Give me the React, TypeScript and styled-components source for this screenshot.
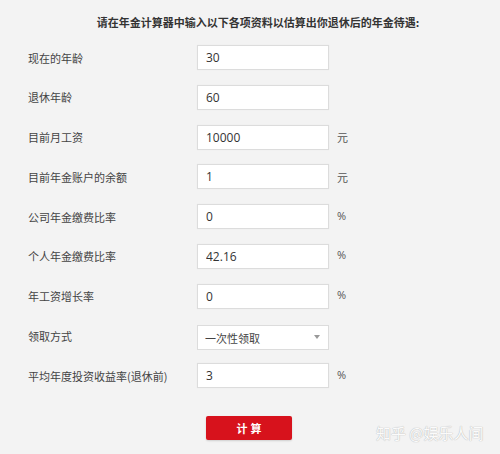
import React from "react";
import styled, { createGlobalStyle } from "styled-components";

const Global = createGlobalStyle`
  html, body { margin: 0; padding: 0; background: #f3f3f3; }
  body { font-family: "Noto Sans CJK SC", "Noto Sans", sans-serif; color: #3a3a3a; }
`;

const Page = styled.div`
  position: relative;
  width: 500px;
  height: 454px;
  box-sizing: border-box;
  padding: 15px 0 0 28px;
  background: #f3f3f3;
  overflow: hidden;
`;

const Title = styled.h1`
  width: 460px;
  margin: 0;
  font-size: 11px;
  line-height: 14px;
  font-weight: 700;
  text-align: center;
  color: #333;
`;

const Form = styled.div`
  margin-top: 16px;
  display: flex;
  flex-direction: column;
  gap: 14.8px;
`;

const Row = styled.div`
  display: grid;
  grid-template-columns: 161px 132px auto;
  column-gap: 8px;
  align-items: center;
  height: 25px;
`;

const Label = styled.label`
  font-size: 11px;
  color: #444;
  white-space: nowrap;
`;

const Field = styled.input`
  box-sizing: border-box;
  width: 132px;
  height: 25px;
  border: 1px solid #dcdcdc;
  background: #fff;
  padding: 0 0 0 8px;
  font-family: "Open Sans", "Noto Sans CJK SC", sans-serif;
  font-size: 12px;
  color: #333;
  outline: none;
  box-shadow: 0 0 1px rgba(0,0,0,0.05);
`;

const SelectWrap = styled.div`
  position: relative;
  width: 132px;
  height: 25px;
  &::after {
    content: "";
    position: absolute;
    right: 9px;
    top: 11px;
    border-left: 3px solid transparent;
    border-right: 3px solid transparent;
    border-top: 4px solid #999;
    pointer-events: none;
  }
`;

const Select = styled.select`
  box-sizing: border-box;
  width: 132px;
  height: 25px;
  appearance: none;
  border: 1px solid #dcdcdc;
  background: #fff;
  padding: 0 0 0 7px;
  font-family: "Noto Sans CJK SC", sans-serif;
  font-size: 11px;
  color: #444;
  outline: none;
  border-radius: 0;
`;

const Unit = styled.span<{ $pct?: boolean }>`
  font-family: "Open Sans", "Noto Sans CJK SC", sans-serif;
  font-size: 11px;
  color: #555;
  margin-top: ${(p) => (p.$pct ? "-3px" : "0")};
`;

const ButtonRow = styled.div`
  margin-top: 26px;
  padding-left: 178px;
`;

const Button = styled.button`
  width: 86px;
  height: 24px;
  border: none;
  border-radius: 2px;
  background: #d7121c;
  color: #fff;
  font-family: "Noto Sans CJK SC", sans-serif;
  font-size: 11px;
  font-weight: 700;
  letter-spacing: 3px;
  padding: 0 0 0 3px;
  box-shadow: 0 1px 2px rgba(0,0,0,0.15);
`;

const Watermark = styled.div`
  position: absolute;
  left: 376px;
  top: 422px;
  font-family: "Noto Sans CJK SC", sans-serif;
  font-size: 15px;
  color: #fbfbfb;
  text-shadow: 0 0 1px #b8b8b8, 0 0 1px #c4c4c4;
  white-space: nowrap;
`;

type F = { label: string; value: string; unit?: string; select?: boolean };

const fields: F[] = [
  { label: "现在的年龄", value: "30" },
  { label: "退休年龄", value: "60" },
  { label: "目前月工资", value: "10000", unit: "元" },
  { label: "目前年金账户的余额", value: "1", unit: "元" },
  { label: "公司年金缴费比率", value: "0", unit: "%" },
  { label: "个人年金缴费比率", value: "42.16", unit: "%" },
  { label: "年工资增长率", value: "0", unit: "%" },
  { label: "领取方式", value: "一次性领取", select: true },
  { label: "平均年度投资收益率(退休前)", value: "3", unit: "%" },
];

export default function App() {
  return (
    <>
      <Global />
      <Page>
        <Title>请在年金计算器中输入以下各项资料以估算出你退休后的年金待遇:</Title>
        <Form>
          {fields.map((f) => (
            <Row key={f.label}>
              <Label>{f.label}</Label>
              {f.select ? (
                <SelectWrap>
                  <Select defaultValue={f.value}>
                    <option>一次性领取</option>
                    <option>按月领取</option>
                  </Select>
                </SelectWrap>
              ) : (
                <Field defaultValue={f.value} />
              )}
              {f.unit ? <Unit $pct={f.unit === "%"}>{f.unit}</Unit> : <span />}
            </Row>
          ))}
        </Form>
        <ButtonRow>
          <Button>计算</Button>
        </ButtonRow>
        <Watermark>知乎 @娱乐人间</Watermark>
      </Page>
    </>
  );
}
